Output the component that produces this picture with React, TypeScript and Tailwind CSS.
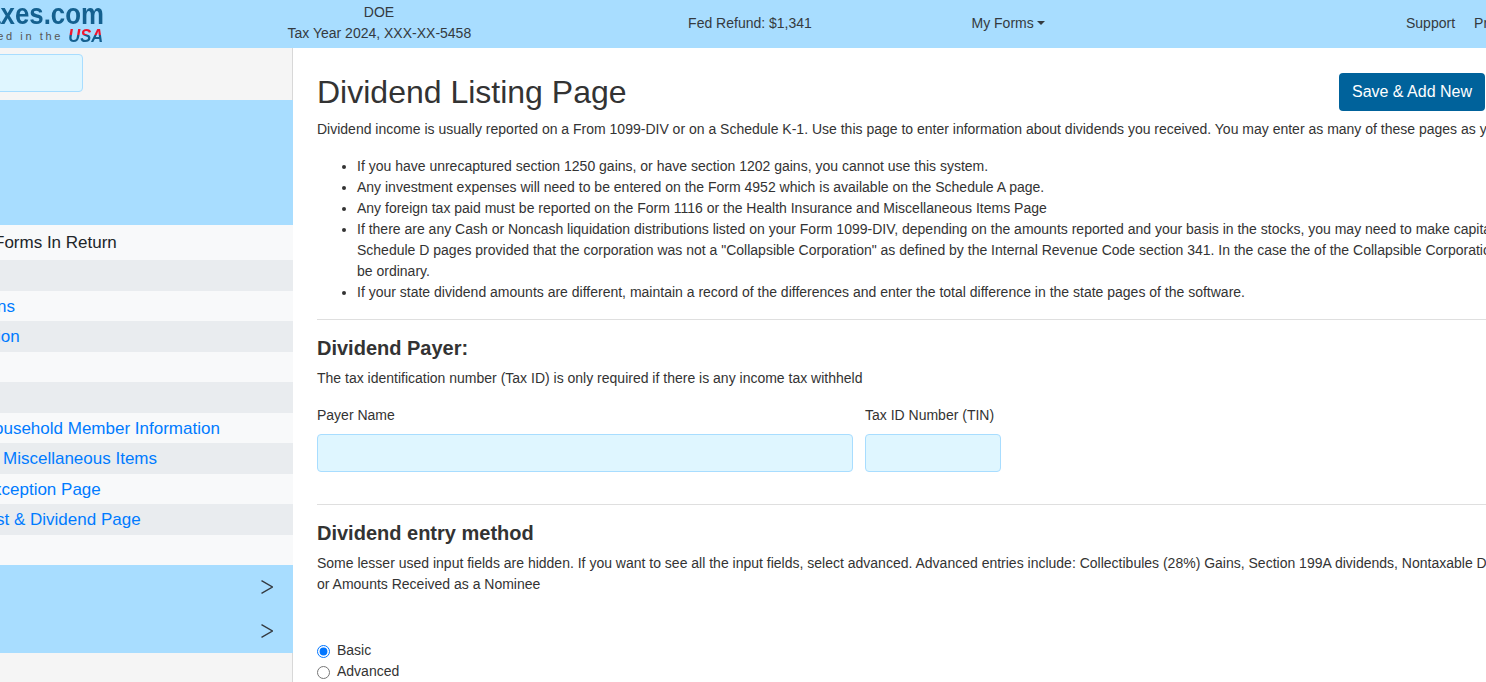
const font = "font-['Liberation_Sans',Arial,sans-serif]";

const bullets = [
  'If you have unrecaptured section 1250 gains, or have section 1202 gains, you cannot use this system.',
  'Any investment expenses will need to be entered on the Form 4952 which is available on the Schedule A page.',
  'Any foreign tax paid must be reported on the Form 1116 or the Health Insurance and Miscellaneous Items Page',
  'If there are any Cash or Noncash liquidation distributions listed on your Form 1099-DIV, depending on the amounts reported and your basis in the stocks, you may need to make capital gain entries on the Schedule D pages provided that the corporation was not a "Collapsible Corporation" as defined by the Internal Revenue Code section 341. In the case the of the Collapsible Corporation, the gains would be ordinary.',
  'If your state dividend amounts are different, maintain a record of the differences and enter the total difference in the state pages of the software.',
];

function SideRow({ text, shade, h, shift }: { text?: string; shade?: boolean; h: string; shift?: string }) {
  return (
    <div className={`flex items-center overflow-hidden whitespace-nowrap text-[17px] text-[#007bff] ${h} ${shade ? 'bg-[#e9ecef]' : 'bg-[#f8f9fa]'}`}>
      <span className={shift}>{text}</span>
    </div>
  );
}

function Chevron() {
  return (
    <svg width="12" height="14" viewBox="0 0 12 14" fill="none" stroke="#343a40" strokeWidth="1.3">
      <path d="M0.5 0.6 L11.4 7 L0.5 13.4" />
    </svg>
  );
}

export default function App() {
  return (
    <div className={`h-[682px] w-[1486px] overflow-hidden bg-white text-[14px] leading-[21px] text-[#333] ${font}`}>
      <div className="flex h-[48px] items-center bg-[#a8ddff] pb-[2px] text-[#343a40]">
        <div className="flex h-[48px] w-[104px] shrink-0 flex-col items-end self-start overflow-hidden">
          <div className="origin-right scale-x-[0.86] whitespace-nowrap text-[30px] font-bold leading-[28px] text-[#14608f]">Taxes.com</div>
          <div className="flex items-center whitespace-nowrap text-[11px] leading-[14px] tracking-[2.6px] text-[#555]">
            Prepared in the
            <span className="origin-right scale-x-[0.87] bg-[linear-gradient(#f0142d_45%,#14608f_45%)] bg-clip-text pr-[1px] text-[19px] font-bold italic leading-[16px] tracking-[0px] text-transparent">USA</span>
          </div>
        </div>
        <div className="ml-[183.5px] w-[183px] shrink-0 whitespace-nowrap text-center">
          <div>DOE</div>
          <div>Tax Year 2024, XXX-XX-5458</div>
        </div>
        <div className="ml-[217.5px] w-[124px] shrink-0 whitespace-nowrap text-center">Fed Refund: $1,341</div>
        <div className="ml-[159.5px] flex w-[74px] shrink-0 items-center whitespace-nowrap">
          My Forms
          <span className="ml-[3px] h-0 w-0 border-x-[4px] border-t-[4px] border-x-transparent border-t-[#343a40]" />
        </div>
        <div className="ml-[360.5px] shrink-0">Support</div>
        <div className="ml-[19px] shrink-0">Profile</div>
      </div>

      <div className="flex h-[634px]">
        <div className="flex w-[293px] shrink-0 flex-col">
          <div className="flex h-[52px] items-start border-r border-[#d8d8d8] bg-[#f5f5f5] pt-[6px]">
            <div className="-ml-[20px] h-[38px] w-[103px] rounded-[4px] border border-[#a8ddff] bg-[#dff6ff]" />
          </div>
          <div className="h-[125px] bg-[#a8ddff]" />
          <div className="flex h-[35px] items-center overflow-hidden whitespace-nowrap bg-[#f8f9fa] text-[17px] text-[#212529]">
            <span className="-ml-[6px]">Forms In Return</span>
          </div>
          <SideRow shade h="h-[31px]" />
          <SideRow h="h-[30px]" shift="-ml-[3px]" text="ns" />
          <SideRow shade h="h-[31px]" shift="-ml-[3px]" text="ion" />
          <SideRow h="h-[30px]" />
          <SideRow shade h="h-[31px]" />
          <SideRow h="h-[30px]" shift="-ml-[6px]" text="ousehold Member Information" />
          <SideRow shade h="h-[31px]" shift="ml-[3px]" text="Miscellaneous Items" />
          <SideRow h="h-[30px]" shift="-ml-[7px]" text="xception Page" />
          <SideRow shade h="h-[31px]" shift="-ml-[4px]" text="st & Dividend Page" />
          <SideRow h="h-[30px]" />
          <div className="flex h-[88px] flex-col items-end justify-around bg-[#a8ddff] pr-[20px]">
            <Chevron />
            <Chevron />
          </div>
          <div className="flex-1 border-r border-[#d8d8d8] bg-[#f5f5f5]" />
        </div>

        <div className="w-[1300px] shrink-0 pl-[24px]">
          <div className="flex w-[1168px] items-start justify-between pt-[25px]">
            <h1 className="text-[32px] leading-[38px]">Dividend Listing Page</h1>
            <button className="h-[38px] w-[146px] rounded-[4px] bg-[#00629b] pb-[2px] text-[16px] text-white">Save & Add New</button>
          </div>
          <p className="mt-[8px] whitespace-nowrap">Dividend income is usually reported on a From 1099-DIV or on a Schedule K-1. Use this page to enter information about dividends you received. You may enter as many of these pages as you need.</p>
          <ul className="mt-[16px] w-[1305px] list-disc pl-[40px]">
            {bullets.map((b) => (
              <li key={b}>{b}</li>
            ))}
          </ul>
          <hr className="mt-[16px] w-[1300px] border-[#dfdfdf]" />
          <h2 className="mt-[16px] text-[20px] font-bold leading-[24px]">Dividend Payer:</h2>
          <p className="mt-[8px]">The tax identification number (Tax ID) is only required if there is any income tax withheld</p>
          <div className="mt-[16px] flex gap-[12px]">
            <label className="block w-[536px]">
              Payer Name
              <input className="mt-[8px] block h-[38px] w-full rounded-[4px] border border-[#a8ddff] bg-[#dff6ff]" />
            </label>
            <label className="block w-[136px]">
              Tax ID Number (TIN)
              <input className="mt-[8px] block h-[38px] w-full rounded-[4px] border border-[#a8ddff] bg-[#dff6ff]" />
            </label>
          </div>
          <hr className="mt-[32px] w-[1300px] border-[#dfdfdf]" />
          <h2 className="mt-[16px] text-[20px] font-bold leading-[24px]">Dividend entry method</h2>
          <p className="mt-[8px] w-[1245px]">Some lesser used input fields are hidden. If you want to see all the input fields, select advanced. Advanced entries include: Collectibules (28%) Gains, Section 199A dividends, Nontaxable Distributions, or Amounts Received as a Nominee</p>
          <div className="mt-[45px]">
            <label className="flex h-[21px] items-center gap-[7px]">
              <input type="radio" name="method" defaultChecked className="m-0 mt-[2px] h-[13px] w-[13px]" />
              Basic
            </label>
            <label className="flex h-[21px] items-center gap-[7px]">
              <input type="radio" name="method" className="m-0 mt-[2px] h-[13px] w-[13px]" />
              Advanced
            </label>
          </div>
        </div>
      </div>
    </div>
  );
}
